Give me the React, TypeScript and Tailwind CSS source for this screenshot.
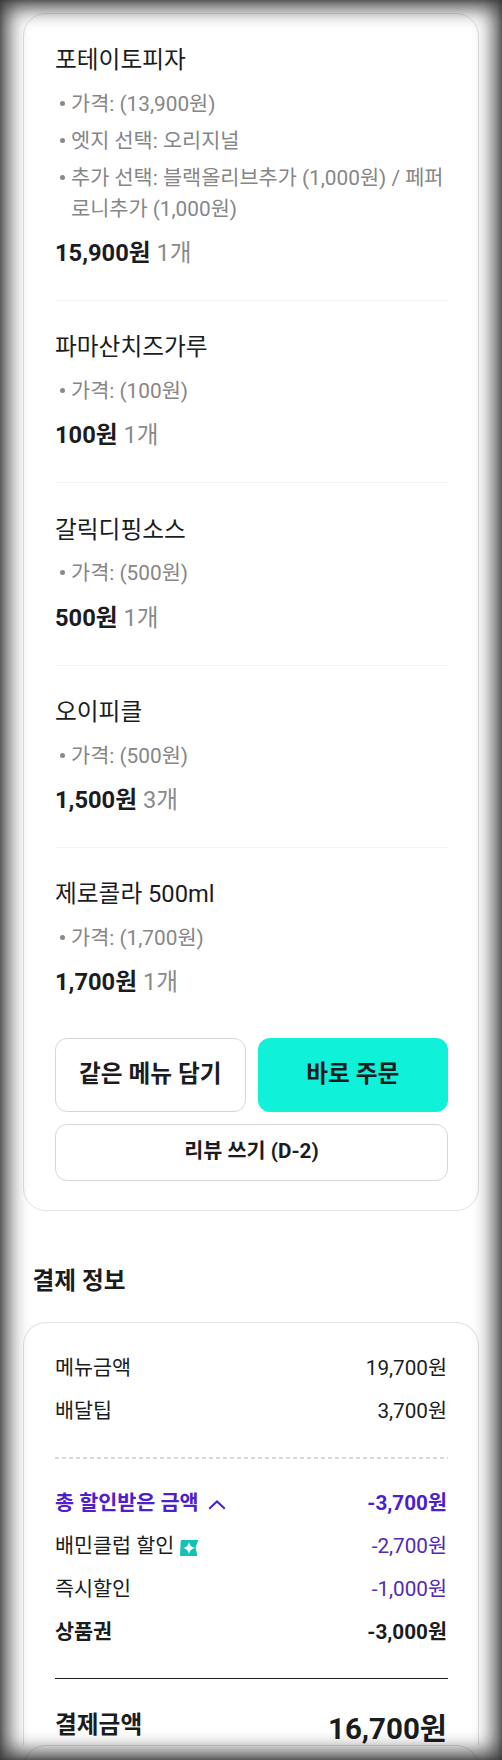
type Item = { name: string; options: string[]; price: string; count: string };

const items: Item[] = [
  {
    name: "포테이토피자",
    options: [
      "가격: (13,900원)",
      "엣지 선택: 오리지널",
      "추가 선택: 블랙올리브추가 (1,000원) / 페퍼로니추가 (1,000원)",
    ],
    price: "15,900원",
    count: "1개",
  },
  { name: "파마산치즈가루", options: ["가격: (100원)"], price: "100원", count: "1개" },
  { name: "갈릭디핑소스", options: ["가격: (500원)"], price: "500원", count: "1개" },
  { name: "오이피클", options: ["가격: (500원)"], price: "1,500원", count: "3개" },
  { name: "제로콜라 500ml", options: ["가격: (1,700원)"], price: "1,700원", count: "1개" },
];

function MenuItem({ item }: { item: Item }) {
  return (
    <li className="border-t border-[#f3f3f3] pt-[28.3px] pb-[29px] first:border-t-0 first:pt-[28px] last:pb-0">
      <h3 className="text-[23.7px] leading-[36px]">{item.name}</h3>
      <ul className="mt-[10.7px] flex flex-col gap-[6px] text-[20.8px] leading-[31px] text-[#868686]">
        {item.options.map((option) => (
          <li key={option} className="flex">
            <span className="mt-[12px] mr-[6px] ml-[5px] h-[5px] w-[5px] shrink-0 rounded-full bg-[#8a8a8a]" />
            <span className="-mr-1 break-all">{option}</span>
          </li>
        ))}
      </ul>
      <p className="mt-[10.3px] text-[23.7px] leading-[36px]">
        <strong className="font-bold">{item.price}</strong> <span className="text-[#8a8a8a]">{item.count}</span>
      </p>
    </li>
  );
}

function Row({ label, value, tone = "" }: { label: React.ReactNode; value: string; tone?: string }) {
  return (
    <div className="flex h-[43px] shrink-0 items-center justify-between pr-px">
      <span className="flex items-center">{label}</span>
      <span className={tone}>{value}</span>
    </div>
  );
}

function ClubBadge() {
  return (
    <svg className="mt-[3px] ml-[6px]" width="19" height="16" viewBox="0 0 19 16">
      <path d="M2 0H18.3L15.6 7.6L17.4 16H1Q0 16 0 15L.7 1.2Q.8 0 2 0Z" fill="#12c2b6" />
      <path d="M9 1.9Q9.8 7 15.2 8Q9.8 9 9 14.1Q8.2 9 3.1 8Q8.2 7 9 1.9Z" fill="#fff" />
    </svg>
  );
}

export default function App() {
  return (
    <div className="relative flex h-[1760px] w-[502px] flex-col overflow-hidden bg-white pt-[13px] pr-[23px] pl-[23px] font-['Roboto','Noto_Sans_CJK_KR',sans-serif] text-[#1b1c1d]">
      <section className="h-[1198px] shrink-0 rounded-[23px] border border-[#e2e2e2] pr-[30px] pl-[31px]">
        <ul>
          {items.map((item) => (
            <MenuItem key={item.name} item={item} />
          ))}
        </ul>
        <div className="mt-[38px] grid grid-cols-2 gap-[12px] font-bold">
          <button className="h-[74px] rounded-[12px] border border-[#d6d6d6] pb-px text-[23.7px]">같은 메뉴 담기</button>
          <button className="h-[74px] rounded-[12px] bg-[#0ff1d8] pb-px text-[23.7px]">바로 주문</button>
          <button className="col-span-2 h-[57px] rounded-[12px] border border-[#d6d6d6] pb-[3px] text-[20.7px]">
            리뷰 쓰기 (D-2)
          </button>
        </div>
      </section>

      <h2 className="mt-[52px] ml-[9.5px] shrink-0 text-[23.7px] leading-[36px] font-bold">결제 정보</h2>

      <section className="mt-[23px] flex h-[423px] shrink-0 flex-col rounded-t-[23px] border border-b-0 border-[#e2e2e2] pt-[24px] pr-[30px] pl-[31px] text-[20.7px] leading-[31px]">
        <Row label="메뉴금액" value="19,700원" />
        <Row label="배달팁" value="3,700원" />
        <div className="mt-[24px] mb-[23px] h-[2px] shrink-0 bg-[repeating-linear-gradient(90deg,#d9d9d9_0_4.3px,transparent_4.3px_7px)]" />
        <Row
          label={
            <span className="flex items-center font-bold text-[#4c20cb]">
              총 할인받은 금액
              <svg className="mt-[2px] ml-[9px]" width="18" height="12" viewBox="0 0 18 12" fill="none">
                <path d="M1.2 9.8L9 2.4L16.8 9.8" stroke="#4c20cb" strokeWidth="2" />
              </svg>
            </span>
          }
          value="-3,700원"
          tone="font-bold text-[#4c20cb]"
        />
        <Row
          label={
            <>
              배민클럽 할인
              <ClubBadge />
            </>
          }
          value="-2,700원"
          tone="text-[#5128b8]"
        />
        <Row label="즉시할인" value="-1,000원" tone="text-[#5128b8]" />
        <Row label={<strong className="font-bold">상품권</strong>} value="-3,000원" tone="font-bold" />
        <div className="mt-[24px] h-px shrink-0 bg-[#1b1c1d]" />
        <div className="mt-[28px] flex shrink-0 items-start justify-between pr-px font-bold">
          <span className="text-[23.7px] leading-[36px]">결제금액</span>
          <span className="mt-[2px] text-[29.5px] leading-[40px]">16,700원</span>
        </div>
      </section>
      <section className="h-[60px] shrink-0 rounded-t-[23px] border border-[#dcdcdc]" />

      <div className="pointer-events-none absolute inset-0 shadow-[inset_0_0_20px_8px_rgba(0,0,0,0.75),inset_0_0_5px_1px_rgba(0,0,0,0.25)]" />
    </div>
  );
}
